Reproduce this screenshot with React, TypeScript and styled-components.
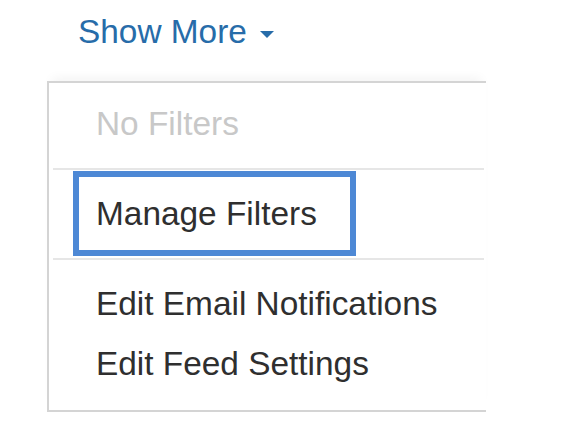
import React from 'react';
import styled, { createGlobalStyle } from 'styled-components';

const GlobalStyle = createGlobalStyle`
  html, body {
    margin: 0;
    padding: 0;
    background: #fff;
  }
  body {
    font-family: 'Liberation Sans', Arial, sans-serif;
  }
`;

const Wrap = styled.div`
  padding: 9px 0 0 47px;
`;

const Toggle = styled.a`
  display: inline-flex;
  align-items: center;
  margin-left: 31px;
  font-size: 33.4px;
  line-height: 46px;
  color: #276ca9;
  text-decoration: none;
  cursor: pointer;
`;

const Caret = styled.span`
  display: inline-block;
  width: 0;
  height: 0;
  margin-left: 13px;
  margin-top: 4px;
  border-top: 7px solid #276ca9;
  border-left: 7px solid transparent;
  border-right: 7px solid transparent;
`;

const Menu = styled.ul`
  box-sizing: border-box;
  width: 439px;
  margin: 26px 0 0;
  padding: 11px 0 16px;
  list-style: none;
  background: #fff;
  border-top: 2px solid #d4d4d4;
  border-bottom: 2px solid #d4d4d4;
  border-left: 2px solid #d4d4d4;
  box-shadow: 0 -8px 10px -5px rgba(0, 0, 0, 0.05);
`;

const Item = styled.li<{ $muted?: boolean }>`
  position: relative;
  padding: 0 47px;
  font-size: 33.4px;
  line-height: 60px;
  white-space: nowrap;
  color: ${(p) => (p.$muted ? '#c8c8c8' : '#2f2f2f')};
`;

const Divider = styled.li`
  height: 2px;
  margin: 14px 2px 14px 4px;
  background: #e6e6e6;
`;

const FocusRing = styled.span`
  position: absolute;
  left: 24px;
  top: -13px;
  width: 283px;
  height: 85px;
  box-sizing: border-box;
  border: 6px solid #4d88d5;
  pointer-events: none;
`;

export default function App() {
  return (
    <Wrap>
      <GlobalStyle />
      <Toggle>
        Show More
        <Caret />
      </Toggle>
      <Menu>
        <Item $muted>No Filters</Item>
        <Divider />
        <Item style={{ marginBottom: 2 }}>
          Manage Filters
          <FocusRing />
        </Item>
        <Divider />
        <Item>Edit Email Notifications</Item>
        <Item>Edit Feed Settings</Item>
      </Menu>
    </Wrap>
  );
}
